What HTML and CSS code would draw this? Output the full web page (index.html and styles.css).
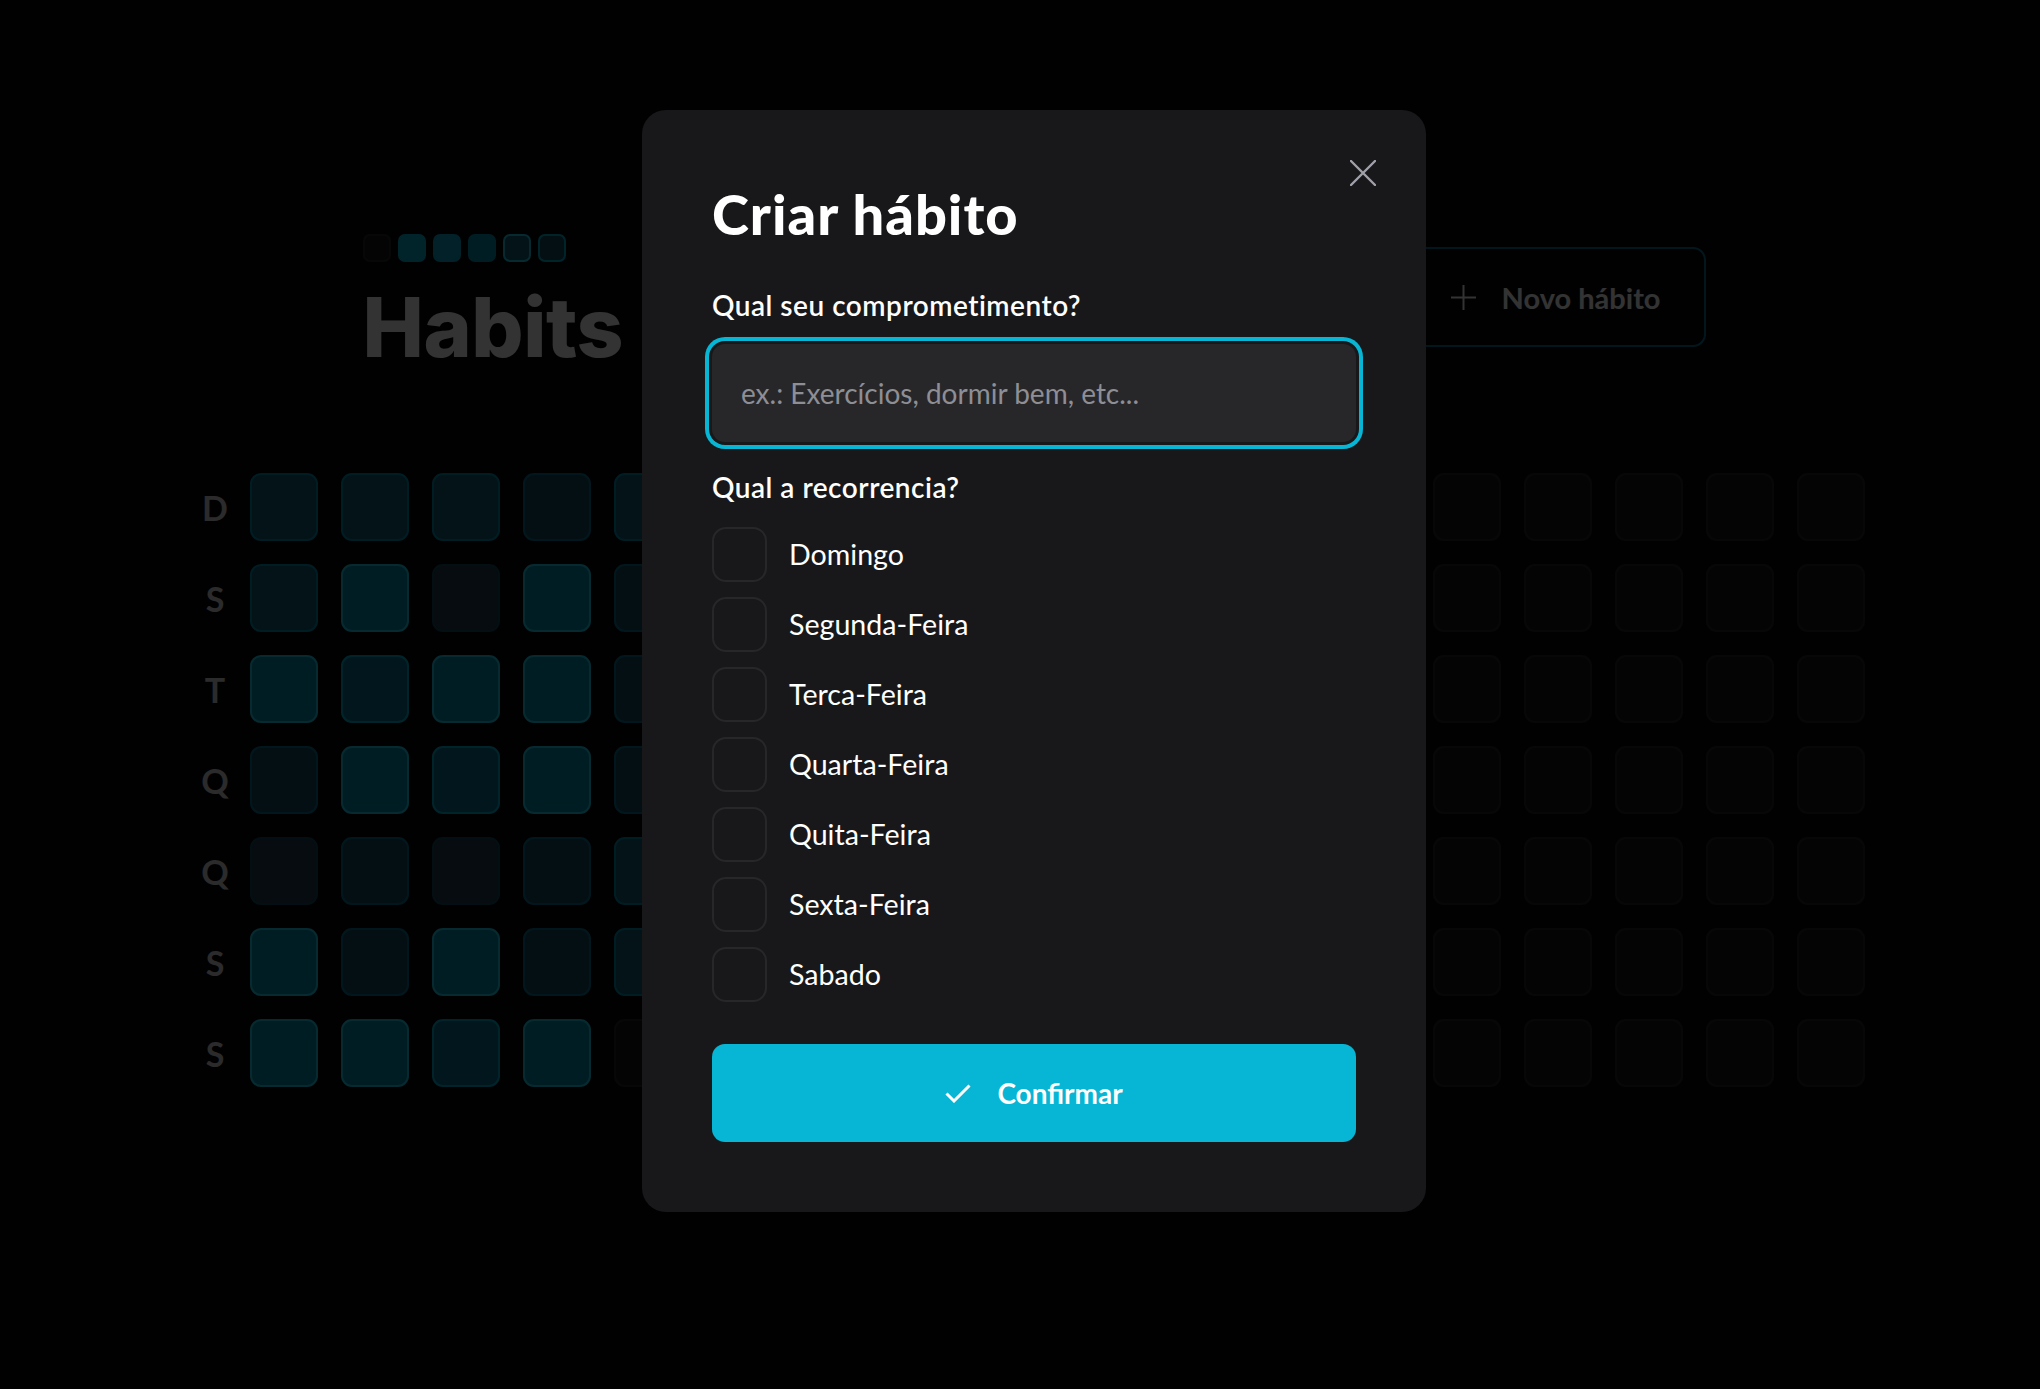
FILE: index.html
```html
<!DOCTYPE html>
<html lang="pt-BR">
<head>
<meta charset="utf-8">
<title>Habits</title>
<link rel="stylesheet" href="styles.css">
</head>
<body>
<div class="app">
  <header class="header">
    <div class="brand">
      <div class="logo">
        <span class="logo-sq sq1"></span>
        <span class="logo-sq sq2"></span>
        <span class="logo-sq sq3"></span>
        <span class="logo-sq sq4"></span>
        <span class="logo-sq sq5"></span>
        <span class="logo-sq sq6"></span>
      </div>
      <h1 class="brand-title">Habits</h1>
    </div>
    <button class="new-btn" type="button">
      <svg class="plus" width="27" height="27" viewBox="0 0 27 27" aria-hidden="true"><path d="M13.5 1v25M1 13.5h25" stroke="currentColor" stroke-width="2" fill="none"/></svg>
      <span>Novo hábito</span>
    </button>
  </header>

  <section class="summary">
    <div class="weekdays">
      <div class="weekday">D</div>
      <div class="weekday">S</div>
      <div class="weekday">T</div>
      <div class="weekday">Q</div>
      <div class="weekday">Q</div>
      <div class="weekday">S</div>
      <div class="weekday">S</div>
    </div>
    <div class="days">
      <!-- col 0 -->
      <div class="day lv3"></div><div class="day lv3"></div><div class="day lv5"></div><div class="day lv2"></div><div class="day lv1"></div><div class="day lv5"></div><div class="day lv5"></div>
      <!-- col 1 -->
      <div class="day lv3"></div><div class="day lv5"></div><div class="day lv4"></div><div class="day lv5"></div><div class="day lv2"></div><div class="day lv2"></div><div class="day lv5"></div>
      <!-- col 2 -->
      <div class="day lv3"></div><div class="day lv1"></div><div class="day lv5"></div><div class="day lv4"></div><div class="day lv1"></div><div class="day lv5"></div><div class="day lv4"></div>
      <!-- col 3 -->
      <div class="day lv2"></div><div class="day lv5"></div><div class="day lv5"></div><div class="day lv5"></div><div class="day lv2"></div><div class="day lv2"></div><div class="day lv5"></div>
      <!-- col 4 -->
      <div class="day lv3"></div><div class="day lv2"></div><div class="day lv2"></div><div class="day lv2"></div><div class="day lv3"></div><div class="day lv3"></div><div class="day"></div>
      <!-- col 5..17 : future days -->
      <div class="day"></div><div class="day"></div><div class="day"></div><div class="day"></div><div class="day"></div><div class="day"></div><div class="day"></div>
      <div class="day"></div><div class="day"></div><div class="day"></div><div class="day"></div><div class="day"></div><div class="day"></div><div class="day"></div>
      <div class="day"></div><div class="day"></div><div class="day"></div><div class="day"></div><div class="day"></div><div class="day"></div><div class="day"></div>
      <div class="day"></div><div class="day"></div><div class="day"></div><div class="day"></div><div class="day"></div><div class="day"></div><div class="day"></div>
      <div class="day"></div><div class="day"></div><div class="day"></div><div class="day"></div><div class="day"></div><div class="day"></div><div class="day"></div>
      <div class="day"></div><div class="day"></div><div class="day"></div><div class="day"></div><div class="day"></div><div class="day"></div><div class="day"></div>
      <div class="day"></div><div class="day"></div><div class="day"></div><div class="day"></div><div class="day"></div><div class="day"></div><div class="day"></div>
      <div class="day"></div><div class="day"></div><div class="day"></div><div class="day"></div><div class="day"></div><div class="day"></div><div class="day"></div>
      <div class="day"></div><div class="day"></div><div class="day"></div><div class="day"></div><div class="day"></div><div class="day"></div><div class="day"></div>
      <div class="day"></div><div class="day"></div><div class="day"></div><div class="day"></div><div class="day"></div><div class="day"></div><div class="day"></div>
      <div class="day"></div><div class="day"></div><div class="day"></div><div class="day"></div><div class="day"></div><div class="day"></div><div class="day"></div>
      <div class="day"></div><div class="day"></div><div class="day"></div><div class="day"></div><div class="day"></div><div class="day"></div><div class="day"></div>
      <div class="day"></div><div class="day"></div><div class="day"></div><div class="day"></div><div class="day"></div><div class="day"></div><div class="day"></div>
    </div>
  </section>
</div>

<div class="overlay"></div>

<div class="modal" role="dialog" aria-labelledby="modal-title">
  <button class="close" type="button" aria-label="Fechar">
    <svg width="26" height="26" viewBox="0 0 26 26" aria-hidden="true"><path d="M1 1L25 25M25 1L1 25" stroke="currentColor" stroke-width="2.4" stroke-linecap="round" fill="none"/></svg>
  </button>
  <h2 class="modal-title" id="modal-title">Criar hábito</h2>

  <form class="form">
    <label class="field-label" for="title">Qual seu comprometimento?</label>
    <input class="field-input" id="title" type="text" placeholder="ex.: Exercícios, dormir bem, etc...">

    <p class="field-label second">Qual a recorrencia?</p>
    <div class="checks">
      <label class="check"><span class="check-box"></span><span class="check-text">Domingo</span></label>
      <label class="check"><span class="check-box"></span><span class="check-text">Segunda-Feira</span></label>
      <label class="check"><span class="check-box"></span><span class="check-text">Terca-Feira</span></label>
      <label class="check"><span class="check-box"></span><span class="check-text">Quarta-Feira</span></label>
      <label class="check"><span class="check-box"></span><span class="check-text">Quita-Feira</span></label>
      <label class="check"><span class="check-box"></span><span class="check-text">Sexta-Feira</span></label>
      <label class="check"><span class="check-box"></span><span class="check-text">Sabado</span></label>
    </div>

    <button class="confirm" type="submit">
      <svg width="26" height="19" viewBox="0 0 26 19" aria-hidden="true"><path d="M1.5 9.5L9 17L24.5 1.5" stroke="currentColor" stroke-width="3" fill="none"/></svg>
      <span>Confirmar</span>
    </button>
  </form>
</div>
</body>
</html>
```
FILE: styles.css
```css
* { box-sizing: border-box; }

html, body {
  margin: 0;
  height: 100%;
}

body {
  background: #09090b;
  color: #fff;
  font-family: "Lato", "Noto Sans", sans-serif;
  overflow: hidden;
}

.app {
  min-height: 100vh;
  display: flex;
  flex-direction: column;
  align-items: center;
  padding: 234px 0 0 28px;
}

/* ---------- header ---------- */
.header {
  width: 1343px;
  display: flex;
  justify-content: space-between;
  align-items: flex-start;
}

.brand {
  display: flex;
  flex-direction: column;
  gap: 25px;
}

.logo {
  display: flex;
  gap: 7px;
}

.logo-sq {
  width: 28px;
  height: 28px;
  border-radius: 7px;
  border: 2px solid transparent;
}
.sq1 { background: #18181b; border-color: #27272a; }
.sq2 { background: #06b6d4; border-color: #06b6d4; }
.sq3 { background: #0aa6c8; border-color: #0aa6c8; }
.sq4 { background: #0891b2; border-color: #0891b2; }
.sq5 { background: #155e75; border-color: #22d3ee; }
.sq6 { background: #164e63; border-color: #06b6d4; }

.brand-title {
  margin: 0;
  font-family: "Inter", sans-serif;
  font-weight: 800;
  font-size: 82px;
  line-height: 1;
  letter-spacing: -0.4px;
  color: #fff;
}

.new-btn {
  margin-top: 13px;
  height: 100px;
  padding: 0 43px;
  display: flex;
  align-items: center;
  gap: 25px;
  border: 2px solid #0e7490;
  border-radius: 13px;
  background: transparent;
  color: #fff;
  font-family: "Lato", sans-serif;
  font-weight: 700;
  font-size: 29px;
}

/* ---------- summary grid ---------- */
.summary {
  margin-top: 104px;
  width: 1684px;
  padding-right: 11px;
  display: flex;
  gap: 12px;
}

.weekdays {
  width: 46px;
  display: grid;
  grid-template-rows: repeat(7, 68px);
  row-gap: 23px;
}

.weekday {
  display: flex;
  align-items: center;
  justify-content: center;
  font-weight: 700;
  font-size: 34px;
  color: #d4d4d8;
}

.days {
  display: grid;
  grid-template-rows: repeat(7, 68px);
  grid-auto-flow: column;
  grid-auto-columns: 68px;
  gap: 23px;
}

.day {
  border-radius: 11px;
  border: 2px solid #27272a;
  background: #18181b;
}
.day.lv1 { background: #1f3c4a; border-color: #164e63; }
.day.lv2 { background: #164e63; border-color: #0e7490; }
.day.lv3 { background: #155e75; border-color: #0891b2; }
.day.lv4 { background: #0e7490; border-color: #06b6d4; }
.day.lv5 { background: #0891b2; border-color: #22d3ee; }

/* ---------- overlay + modal ---------- */
.overlay {
  position: fixed;
  inset: 0;
  background: rgba(0, 0, 0, 0.8);
}

.modal {
  position: fixed;
  top: 110px;
  left: 642px;
  width: 784px;
  padding: 70px;
  background: #18181b;
  border-radius: 24px;
  display: flex;
  flex-direction: column;
}

.close {
  position: absolute;
  top: 50px;
  right: 50px;
  padding: 0;
  border: 0;
  background: none;
  color: #a1a1aa;
  display: flex;
}

.modal-title {
  margin: 0;
  font-weight: 900;
  font-size: 56px;
  line-height: 67px;
  letter-spacing: 1px;
  color: #fff;
}

.form {
  display: flex;
  flex-direction: column;
}

.field-label {
  margin: 42px 0 0;
  font-weight: 600;
  font-size: 28px;
  line-height: 33px;
  letter-spacing: 0.5px;
  color: #fff;
}
.field-label.second {
  margin-top: 29px;
}

.field-input {
  margin-top: 22px;
  width: 100%;
  height: 98px;
  padding: 0 29px;
  border: 0;
  border-radius: 13px;
  background: #27272a;
  color: #fff;
  font-family: "Lato", sans-serif;
  font-size: 28px;
  outline: none;
  box-shadow: 0 0 0 3px #18181b, 0 0 0 7px #06b6d4;
}
.field-input::placeholder {
  color: #8e8e95;
}

.checks {
  margin-top: 23px;
  display: flex;
  flex-direction: column;
  gap: 15px;
}

.check {
  display: flex;
  align-items: center;
  gap: 22px;
}

.check-box {
  width: 55px;
  height: 55px;
  border-radius: 14px;
  border: 2px solid #27272a;
  background: #18181b;
}

.check-text {
  padding-top: 1px;
  font-size: 28.6px;
  line-height: 1.25;
  color: #fff;
}

.confirm {
  margin-top: 42px;
  height: 98px;
  width: 100%;
  border: 0;
  border-radius: 13px;
  background: #06b6d4;
  color: #fff;
  display: flex;
  align-items: center;
  justify-content: center;
  gap: 26px;
  font-family: "Lato", sans-serif;
  font-weight: 700;
  font-size: 28px;
}
```
